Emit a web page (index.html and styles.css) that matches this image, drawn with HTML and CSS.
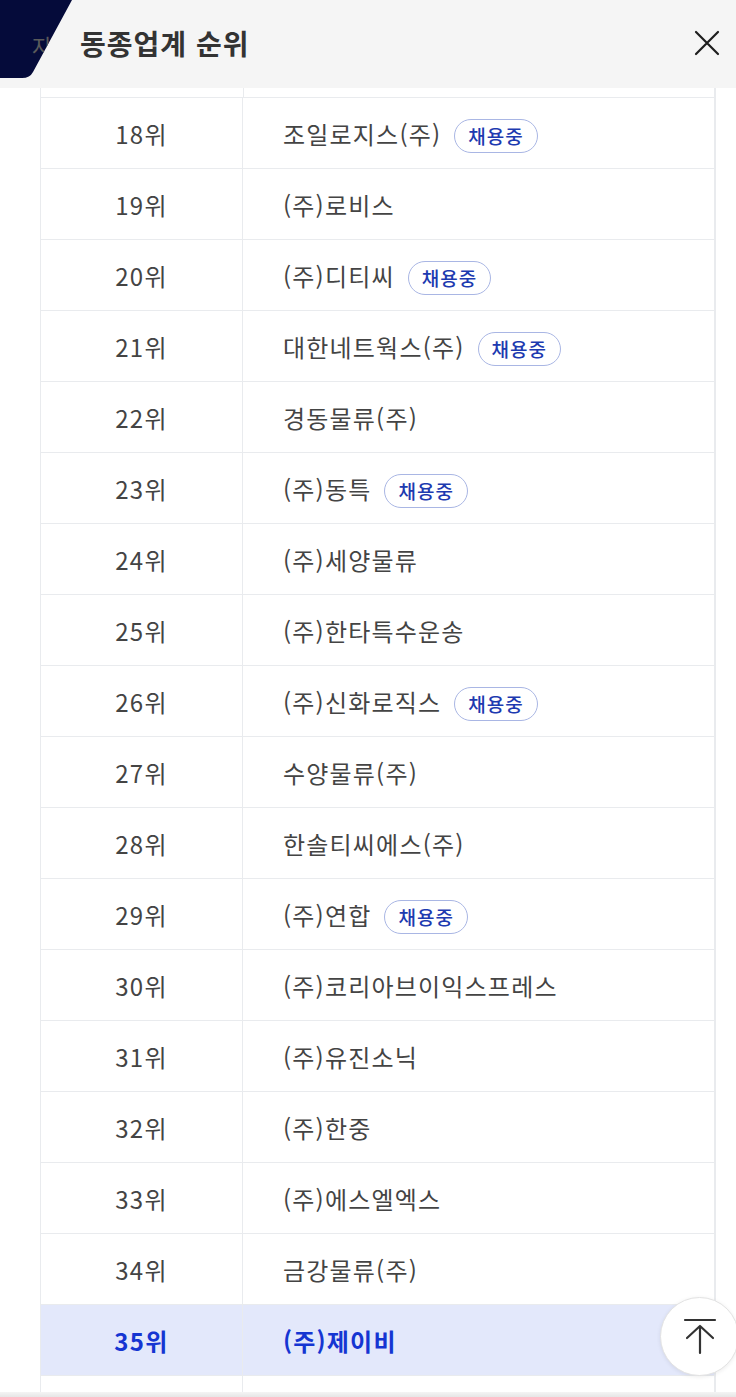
FILE: index.html
```html
<!DOCTYPE html>
<html lang="ko">
<head>
  <meta charset="UTF-8" />
  <meta name="viewport" content="width=device-width, initial-scale=1.0"/>
  <title>동종업계 순위</title>
  <link rel="stylesheet" href="styles.css">
</head>
<body>
  <div class="back-tab">
    <svg width="80" height="80" viewBox="0 0 80 80">
      <defs>
        <clipPath id="tabClip">
          <path d="M0 0 H72 L33 72 Q30 78 22 78 H0 Z"/>
        </clipPath>
      </defs>
      <path d="M0 0 H72 L33 72 Q30 78 22 78 H0 Z" fill="#050b3a"/>
      <text x="32" y="55" clip-path="url(#tabClip)" class="back-tab-text">자</text>
    </svg>
  </div>

  <div class="header">
    <h2>동종업계 순위</h2>
    <button class="close" aria-label="닫기">
      <svg width="26" height="26" viewBox="0 0 26 26">
        <path d="M2 2 L24 24 M24 2 L2 24" stroke="#1e1e1e" stroke-width="2.2" stroke-linecap="round"/>
      </svg>
    </button>
  </div>

  <div class="list">
    <div class="rank-table">
      <div class="row-tail"></div>
      <div class="row">
        <div class="rank">18위</div>
        <div class="name">조일로지스(주) <span class="badge">채용중</span></div>
      </div>
      <div class="row">
        <div class="rank">19위</div>
        <div class="name">(주)로비스</div>
      </div>
      <div class="row">
        <div class="rank">20위</div>
        <div class="name">(주)디티씨 <span class="badge">채용중</span></div>
      </div>
      <div class="row">
        <div class="rank">21위</div>
        <div class="name">대한네트웍스(주) <span class="badge">채용중</span></div>
      </div>
      <div class="row">
        <div class="rank">22위</div>
        <div class="name">경동물류(주)</div>
      </div>
      <div class="row">
        <div class="rank">23위</div>
        <div class="name">(주)동특 <span class="badge">채용중</span></div>
      </div>
      <div class="row">
        <div class="rank">24위</div>
        <div class="name">(주)세양물류</div>
      </div>
      <div class="row">
        <div class="rank">25위</div>
        <div class="name">(주)한타특수운송</div>
      </div>
      <div class="row">
        <div class="rank">26위</div>
        <div class="name">(주)신화로직스 <span class="badge">채용중</span></div>
      </div>
      <div class="row">
        <div class="rank">27위</div>
        <div class="name">수양물류(주)</div>
      </div>
      <div class="row">
        <div class="rank">28위</div>
        <div class="name">한솔티씨에스(주)</div>
      </div>
      <div class="row">
        <div class="rank">29위</div>
        <div class="name">(주)연합 <span class="badge">채용중</span></div>
      </div>
      <div class="row">
        <div class="rank">30위</div>
        <div class="name">(주)코리아브이익스프레스</div>
      </div>
      <div class="row">
        <div class="rank">31위</div>
        <div class="name">(주)유진소닉</div>
      </div>
      <div class="row">
        <div class="rank">32위</div>
        <div class="name">(주)한중</div>
      </div>
      <div class="row">
        <div class="rank">33위</div>
        <div class="name">(주)에스엘엑스</div>
      </div>
      <div class="row">
        <div class="rank">34위</div>
        <div class="name">금강물류(주)</div>
      </div>
      <div class="row mine">
        <div class="rank">35위</div>
        <div class="name">(주)제이비</div>
      </div>
      <div class="row">
        <div class="rank">36위</div>
        <div class="name">(주)케이엘글로벌로지스 <span class="badge">채용중</span></div>
      </div>
    </div>
  </div>

  <button class="to-top" aria-label="맨 위로">
    <svg width="34" height="40" viewBox="0 0 34 40">
      <path d="M2 3 H32 M17 9 V36 M4 21 L17 9 L30 21" stroke="#333" stroke-width="2.2" fill="none" stroke-linecap="round" stroke-linejoin="round"/>
    </svg>
  </button>

  <div class="bottom-edge"></div>
</body>
</html>
```

FILE: styles.css
```css
body {
  margin: 0;
  padding: 0;
  font-family: "Noto Sans CJK KR", "Noto Sans", sans-serif;
  background-color: white;
  color: #444;
  height: 100vh;
  overflow: hidden;
  display: flex;
  flex-direction: column;
}

button {
  border: none;
  background: none;
  padding: 0;
  cursor: pointer;
}

.back-tab {
  position: absolute;
  left: 0;
  top: 0;
  z-index: 2;
  line-height: 0;
}

.back-tab-text {
  font-family: "Noto Sans CJK KR", sans-serif;
  font-size: 22px;
  fill: #5a5a5a;
}

.header {
  height: 88px;
  flex-shrink: 0;
  background-color: #f5f5f5;
  display: flex;
  align-items: center;
  justify-content: space-between;
  padding: 0 15px 0 80px;
  position: relative;
  z-index: 1;
}

h2 {
  margin: 0 0 2px;
  font-size: 28px;
  font-weight: 700;
  color: #333;
  letter-spacing: 1px;
}

.close {
  width: 28px;
  height: 28px;
  display: flex;
  align-items: center;
  justify-content: center;
  margin-bottom: 2px;
}

.list {
  flex: 1;
  overflow: hidden;
  padding: 0 20px 0 40px;
}

.rank-table {
  border-left: 1px solid #e9ebee;
  border-right: 2px solid #e9ebee;
}

.row-tail {
  height: 9px;
  border-bottom: 1px solid #e9ebee;
  background: linear-gradient(to right, transparent 202px, #e9ebee 202px, #e9ebee 203px, transparent 203px);
}

.row {
  display: grid;
  grid-template-columns: 202px 1fr;
  height: 70px;
  border-bottom: 1px solid #e9ebee;
}

.rank {
  display: flex;
  align-items: center;
  justify-content: center;
  border-right: 1px solid #e9ebee;
  font-size: 24px;
  letter-spacing: 1.3px;
}

.name {
  display: flex;
  align-items: center;
  padding-left: 40px;
  font-size: 24px;
  letter-spacing: 1.2px;
  white-space: nowrap;
}

.badge {
  display: inline-flex;
  align-items: center;
  height: 32px;
  padding: 0 13px;
  margin: 5px 0 0 13px;
  border: 1px solid #a9b6e4;
  border-radius: 17px;
  color: #1d3ab0;
  font-size: 19px;
  font-weight: 500;
  letter-spacing: 1px;
}

.mine {
  background-color: #e3e8fb;
}

.mine .rank,
.mine .name {
  color: #1535d2;
  font-weight: 700;
}

.to-top {
  position: fixed;
  left: 660px;
  top: 1297px;
  width: 79px;
  height: 79px;
  border-radius: 50%;
  background-color: white;
  border: 1px solid #e2e2e2;
  box-shadow: 0 1px 4px rgba(0, 0, 0, 0.08);
  display: flex;
  align-items: center;
  justify-content: center;
}

.bottom-edge {
  position: fixed;
  left: 0;
  right: 0;
  bottom: 0;
  height: 5px;
  background: linear-gradient(#f4f4f4, #e6e6e6);
}
```
